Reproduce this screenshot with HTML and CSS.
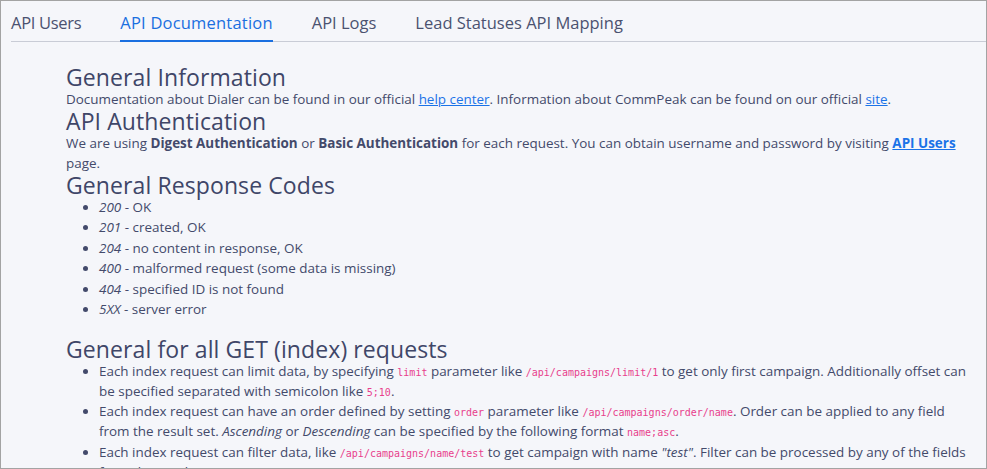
FILE: index.html
```html
<!DOCTYPE html>
<html>
<head>
<meta charset="utf-8">
<link rel="stylesheet" href="styles.css">
</head>
<body>
<div class="frame">
  <nav class="tabs">
    <a class="tab">API Users</a>
    <a class="tab active">API Documentation</a>
    <a class="tab">API Logs</a>
    <a class="tab">Lead Statuses API Mapping</a>
  </nav>
  <main class="doc">
    <h2>General Information</h2>
    <p>Documentation about Dialer can be found in our official <a class="link" href="#">help center</a>. Information about CommPeak can be found on our official <a class="link" href="#">site</a>.</p>
    <h2>API Authentication</h2>
    <p>We are using <b>Digest Authentication</b> or <b>Basic Authentication</b> for each request. You can obtain username and password by visiting <a class="link strong" href="#">API Users</a> page.</p>
    <h2>General Response Codes</h2>
    <ul>
      <li><i>200</i> - OK</li>
      <li><i>201</i> - created, OK</li>
      <li><i>204</i> - no content in response, OK</li>
      <li><i>400</i> - malformed request (some data is missing)</li>
      <li><i>404</i> - specified ID is not found</li>
      <li><i>5XX</i> - server error</li>
    </ul>
    <h2>General for all GET (index) requests</h2>
    <ul>
      <li>Each index request can limit data, by specifying <code>limit</code> parameter like <code>/api/campaigns/limit/1</code> to get only first campaign. Additionally offset can be specified separated with semicolon like <code>5;10</code>.</li>
      <li>Each index request can have an order defined by setting <code>order</code> parameter like <code>/api/campaigns/order/name</code>. Order can be applied to any field from the result set. <i>Ascending</i> or <i>Descending</i> can be specified by the following format <code>name;asc</code>.</li>
      <li>Each index request can filter data, like <code>/api/campaigns/name/test</code> to get campaign with name <i>"test"</i>. Filter can be processed by any of the fields from the result set.</li>
    </ul>
  </main>
</div>
</body>
</html>
```
FILE: styles.css
```css
* { box-sizing: border-box; }
html, body { margin: 0; padding: 0; }
body {
  width: 987px;
  height: 469px;
  overflow: hidden;
  font-family: "Open Sans", "Noto Sans", sans-serif;
  color: #434a6b;
  background: #f5f6fa;
}
.frame {
  width: 987px;
  height: 469px;
  border: 1px solid #a3a3a3;
  overflow: hidden;
  background: #f5f6fa;
}
.tabs {
  display: flex;
  gap: 39px;
  margin: 0 0 0 10px;
  border-bottom: 1px solid #c9ccd6;
  height: 41px;
}
.tab {
  font-size: 16.5px;
  line-height: 20px;
  padding-top: 12px;
  color: #4b5270;
  height: 41px;
}
.tab:first-child { letter-spacing: -0.3px; }
.tab.active {
  color: #1a6fe0;
  border-bottom: 2px solid #1a6fe0;
  letter-spacing: 0.2px;
}
.doc {
  padding: 23px 12px 0 65px;
  font-size: 13.45px;
  line-height: 20px;
}
h2 {
  font-size: 23px;
  letter-spacing: 0.1px;
  font-weight: 400;
  line-height: 24px;
  margin: 0;
  color: #3f4668;
}
p { margin: 0; }
b { font-weight: 700; }
.link { color: #1a73e8; text-decoration: underline; }
.link.strong { font-weight: 700; }
ul {
  margin: 0 0 18px;
  padding-left: 33px;
}
li { line-height: 20px; }
li + li { margin-top: 0.4px; }
code {
  font-family: "DejaVu Sans Mono", "Liberation Mono", monospace;
  font-size: 10px;
  line-height: 1;
  color: #e83e8c;
}
```
